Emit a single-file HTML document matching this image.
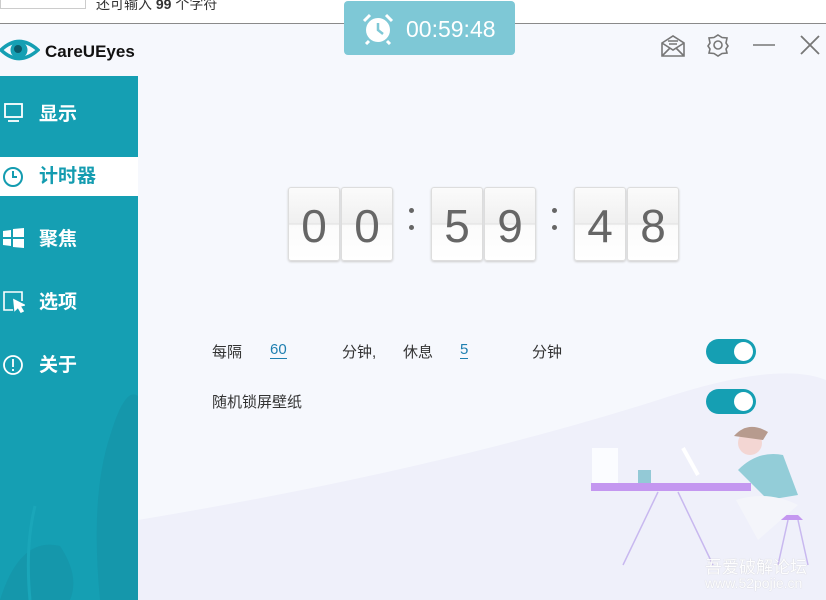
<!DOCTYPE html>
<html><head><meta charset="utf-8"><style>
body{margin:0;width:826px;height:600px;overflow:hidden;background:#f6f8fd;font-family:"Liberation Sans","Noto Sans CJK SC",sans-serif;position:relative}
.top{position:absolute;left:0;top:0;width:826px;height:23px;background:#fff;border-bottom:1px solid #8a8a8a}
.inp{position:absolute;left:0;top:-2px;width:84px;height:10px;border:1px solid #ccc;border-top:none;background:#fff}
.sb{position:absolute;left:0;top:76px;width:138px;height:524px;background:#159fb3;overflow:hidden}
.it{position:absolute;left:0;width:138px;height:39px;color:#fff;font-weight:bold;font-size:19px}
.it span{position:absolute;left:39px;top:4px}
.act{background:#fff;color:#149cb0}
.card{position:absolute;top:187px;width:50px;height:72px;background:linear-gradient(#fbfbfb,#f0f0f0 48%,#e4e4e4 50%,#fbfbfb 52%,#fff);border:1px solid #ddd;border-radius:3px;box-shadow:0 1px 2px #ccc;font-size:46px;color:#666;text-align:center;line-height:76px;font-family:"Liberation Sans",sans-serif}
.col{position:absolute;top:208px;width:5px}
.col i{display:block;width:5px;height:5px;border-radius:50%;background:#666;margin-bottom:12px}
.t{position:absolute;font-size:15px;color:#333}
.lnk{color:#1f7fb0;border-bottom:1px solid #1f7fb0}
.tg{position:absolute;left:706px;width:50px;height:25px;border-radius:13px;background:#159fb3}
.tg i{position:absolute;right:3px;top:3px;width:19px;height:19px;border-radius:50%;background:#fff}
</style></head><body>
<div class="top"><div class="inp"></div><span style="position:absolute;left:96px;top:-6px;font-size:14px;color:#333">还可输入 <b>99</b> 个字符</span></div>
<svg style="position:absolute;left:0;top:36px" width="40" height="28"><path d="M1 14 Q19 -3 38 14 Q19 31 1 14Z" fill="none" stroke="#159fb3" stroke-width="3.5"/><circle cx="19" cy="14" r="8.5" fill="#159fb3"/><circle cx="18" cy="13" r="4" fill="#0b5a6a"/></svg>
<div style="position:absolute;left:45px;top:42px;font-size:17px;font-weight:bold;color:#111">CareUEyes</div>
<div style="position:absolute;left:344px;top:1px;width:171px;height:54px;background:#7ec8d6;border-radius:4px;color:#fff;font-size:23px"><svg style="position:absolute;left:18px;top:12px" width="32" height="32"><circle cx="16" cy="17" r="12" fill="#fff"/><path d="M16 10V17L21 21" stroke="#7ec8d6" stroke-width="2.5" fill="none"/><path d="M2 8L8 2M30 8L24 2M7 28L4 31M25 28L28 31" stroke="#fff" stroke-width="3"/></svg><span style="position:absolute;left:62px;top:15px">00:59:48</span></div>
<svg style="position:absolute;left:660px;top:34px" width="170" height="24" fill="none" stroke="#777" stroke-width="1.6"><path d="M2 9L13 2L24 9V22H2Z M2 9L13 16L24 9 M2 22L10 14 M24 22L16 14 M8 7H18 M9 10H17"/><circle cx="58" cy="11" r="4"/><path d="M58 1L62 3.5L67 4L66 9L68 12L66 15L67 19L62 19.5L58 22L54 19.5L49 19L50 15L48 12L50 9L49 4L54 3.5Z"/><path d="M93 11H115"/><path d="M141 2L159 20M159 2L141 20" stroke-width="1.8"/></svg>
<div style="position:absolute;left:138px;top:76px;width:688px;height:524px;background:#f6f8fd"></div>
<svg style="position:absolute;left:138px;top:340px" width="688" height="260"><path d="M0 260 L0 180 Q300 130 520 60 Q640 20 688 40 L688 260Z" fill="#eff0fa"/><rect x="454" y="108" width="26" height="40" fill="#fbfcff"/><rect x="453" y="143" width="160" height="8" fill="#c497f0"/><rect x="500" y="130" width="13" height="13" fill="#93c9d6"/><path d="M520 152L485 225M540 152L575 225M650 180L640 225M660 180L670 225" stroke="#c8b8ef" stroke-width="1.5"/><path d="M640 180H665L660 175H645Z" fill="#c497f0"/><path d="M600 130 Q620 110 645 115 L660 155 L630 160 Z" fill="#93cdd8"/><circle cx="612" cy="103" r="12" fill="#f3d6d3"/><path d="M596 96 Q610 80 630 92 L625 100 Z" fill="#b79b8e"/><path d="M598 160 Q630 150 660 165 L620 200 Z" fill="#f4f5fa"/><path d="M545 108L560 135" stroke="#fff" stroke-width="4"/></svg>
<div class="sb"><svg width="138" height="524" style="position:absolute;left:0;top:0"><path d="M100 524 Q90 420 110 360 Q125 310 138 320 V524Z M0 524 Q20 460 60 470 Q80 500 70 524Z" fill="#1597ab"/><path d="M30 524 Q25 470 35 430" stroke="#1aa6b9" stroke-width="3" fill="none"/></svg></div>
<div class="it" style="top:95px"><svg style="position:absolute;left:4px;top:8px" width="20" height="20" fill="none" stroke="#fff" stroke-width="1.8"><rect x="1" y="1" width="17" height="13"/><path d="M4 18H15"/></svg><span>显示</span></div>
<div class="it act" style="top:157px"><svg style="position:absolute;left:2px;top:9px" width="22" height="22" fill="none" stroke="#149cb0" stroke-width="2"><circle cx="11" cy="11" r="9"/><path d="M11 5V11H15"/></svg><span>计时器</span></div>
<div class="it" style="top:220px"><svg style="position:absolute;left:3px;top:8px" width="22" height="20" fill="#fff"><path d="M0 3L8 2V9H0ZM10 1L21 0V9H10ZM0 11H8V18L0 17ZM10 11H21V20L10 19Z"/></svg><span>聚焦</span></div>
<div class="it" style="top:283px"><svg style="position:absolute;left:3px;top:8px" width="22" height="22" fill="none" stroke="#fff" stroke-width="1.6"><path d="M10 19H1V1H19V10"/><path d="M11 9L21 14L17 15L20 20L18 21L15 16L12 19Z" fill="#fff"/></svg><span>选项</span></div>
<div class="it" style="top:346px"><svg style="position:absolute;left:2px;top:8px" width="22" height="22" fill="none" stroke="#fff" stroke-width="1.8"><circle cx="11" cy="11" r="9"/><path d="M11 5V13M11 15V17"/></svg><span>关于</span></div>
<div class="card" style="left:288px">0</div><div class="card" style="left:341px">0</div>
<div class="col" style="left:409px"><i></i><i></i></div>
<div class="card" style="left:431px">5</div><div class="card" style="left:484px">9</div>
<div class="col" style="left:552px"><i></i><i></i></div>
<div class="card" style="left:574px">4</div><div class="card" style="left:627px">8</div>
<div class="t" style="left:212px;top:341px">每隔</div>
<div class="t lnk" style="left:270px;top:341px">60</div>
<div class="t" style="left:342px;top:341px">分钟,</div>
<div class="t" style="left:403px;top:341px">休息</div>
<div class="t lnk" style="left:460px;top:341px">5</div>
<div class="t" style="left:532px;top:341px">分钟</div>
<div class="tg" style="top:339px"><i></i></div>
<div class="t" style="left:212px;top:391px">随机锁屏壁纸</div>
<div class="tg" style="top:389px"><i></i></div>
<div style="position:absolute;left:705px;top:553px;color:#fff;font-size:17px;opacity:.9;text-shadow:0 0 1px #bbb">吾爱破解论坛</div>
<div style="position:absolute;left:705px;top:575px;color:#fff;font-size:14px;opacity:.9;text-shadow:0 0 1px #bbb">www.52pojie.cn</div>
</body></html>
